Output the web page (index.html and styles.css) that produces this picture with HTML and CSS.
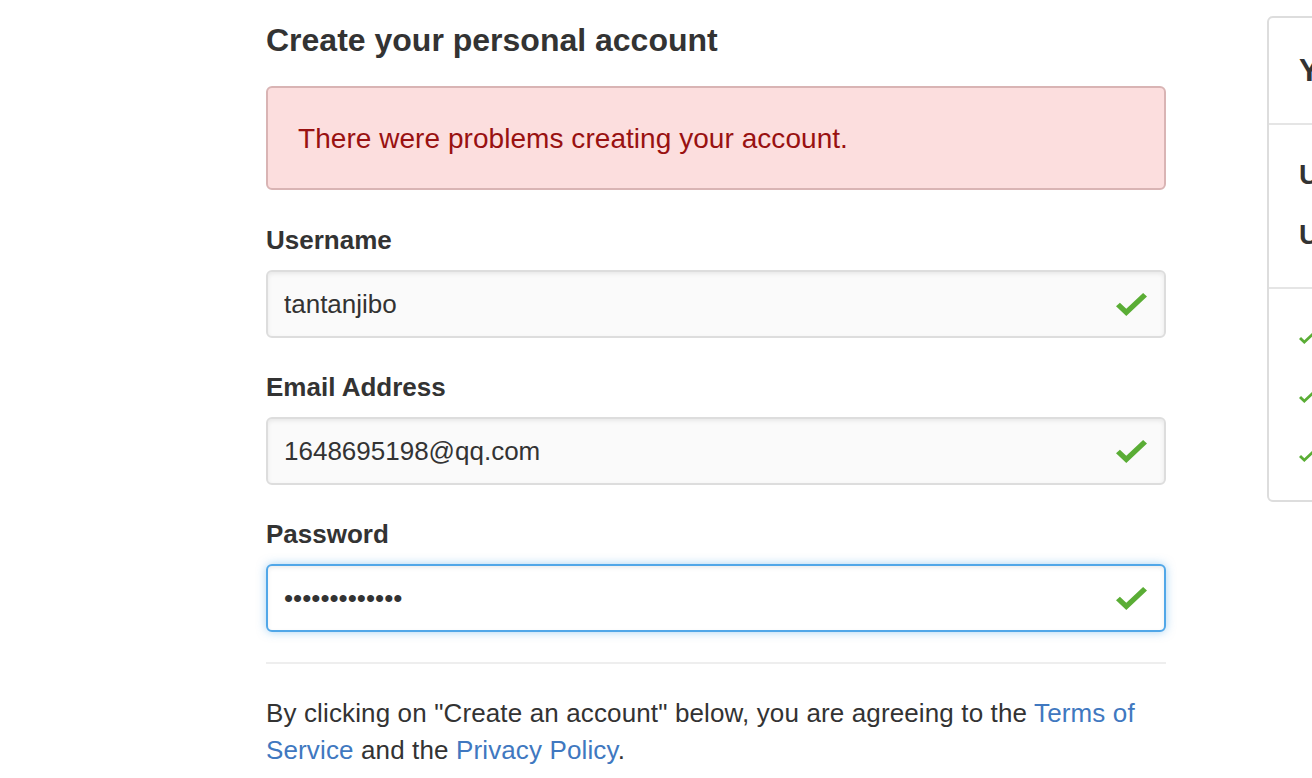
FILE: index.html
```html
<!DOCTYPE html>
<html lang="en">
<head>
<meta charset="utf-8">
<title>Join GitHub</title>
<link rel="stylesheet" href="styles.css">
</head>
<body>
<div class="page">
  <main class="main">
    <h1 class="title">Create your personal account</h1>
    <div class="flash">There were problems creating your account.</div>

    <div class="group">
      <label class="label" for="u">Username</label>
      <div class="field">
        <input class="input" id="u" type="text" value="tantanjibo">
        <svg class="ok" viewBox="0 0 31 23" width="31" height="23" aria-hidden="true"><path d="M31 3.6L10.3 23 0 13.3l3.9-3.6 6.4 6L27.1 0z"/></svg>
      </div>
    </div>

    <div class="group">
      <label class="label" for="e">Email Address</label>
      <div class="field">
        <input class="input" id="e" type="text" value="1648695198@qq.com">
        <svg class="ok" viewBox="0 0 31 23" width="31" height="23" aria-hidden="true"><path d="M31 3.6L10.3 23 0 13.3l3.9-3.6 6.4 6L27.1 0z"/></svg>
      </div>
    </div>

    <div class="group">
      <label class="label" for="p">Password</label>
      <div class="field">
        <input class="input input-focus" id="p" type="password" value="abcdefghijklm">
        <svg class="ok" viewBox="0 0 31 23" width="31" height="23" aria-hidden="true"><path d="M31 3.6L10.3 23 0 13.3l3.9-3.6 6.4 6L27.1 0z"/></svg>
      </div>
    </div>

    <hr class="rule">

    <p class="terms">By clicking on "Create an account" below, you are agreeing to the <a href="#">Terms of Service</a> and the <a href="#">Privacy Policy</a>.</p>
  </main>

  <aside class="panel">
    <h2 class="panel-title">You'll love GitHub</h2>
    <ul class="panel-list strong">
      <li>Unlimited collaborators</li>
      <li>Unlimited public repositories</li>
    </ul>
    <ul class="panel-list checks">
      <li><svg class="mini-ok" viewBox="0 0 31 23" width="16" height="12" aria-hidden="true"><path d="M31 3.6L10.3 23 0 13.3l3.9-3.6 6.4 6L27.1 0z"/></svg>Great communication</li>
      <li><svg class="mini-ok" viewBox="0 0 31 23" width="16" height="12" aria-hidden="true"><path d="M31 3.6L10.3 23 0 13.3l3.9-3.6 6.4 6L27.1 0z"/></svg>Friction-less development</li>
      <li><svg class="mini-ok" viewBox="0 0 31 23" width="16" height="12" aria-hidden="true"><path d="M31 3.6L10.3 23 0 13.3l3.9-3.6 6.4 6L27.1 0z"/></svg>Open source community</li>
    </ul>
  </aside>
</div>
</body>
</html>
```
FILE: styles.css
```css
html, body {
  margin: 0;
  padding: 0;
  background: #fff;
  overflow: hidden;
}

body {
  font-family: "Liberation Sans", Arial, Helvetica, sans-serif;
  color: #333;
  width: 1312px;
  height: 778px;
}

.page {
  display: flex;
  align-items: flex-start;
  gap: 101px;
  padding-left: 266px;
}

.main {
  width: 900px;
  flex: 0 0 900px;
}

.title {
  margin: 20px 0 0;
  font-size: 32px;
  line-height: 40px;
  font-weight: bold;
  color: #333;
}

.flash {
  margin-top: 26px;
  box-sizing: border-box;
  height: 104px;
  padding: 30px 30px;
  border: 2px solid #d9b4b4;
  border-radius: 6px;
  background: #fcdede;
  color: #991111;
  font-size: 28px;
  line-height: 42px;
  letter-spacing: 0.05px;
}

.group {
  margin-top: 35px;
}

.group + .group {
  margin-top: 34px;
}

.label {
  display: block;
  font-size: 26px;
  line-height: 30px;
  font-weight: bold;
  color: #333;
  margin-bottom: 15px;
}

.field {
  position: relative;
}

.input {
  display: block;
  box-sizing: border-box;
  width: 100%;
  height: 68px;
  margin: 0;
  padding: 0 60px 0 16px;
  border: 2px solid #dddddd;
  border-radius: 6px;
  background: #fafafa;
  box-shadow: inset 0 2px 4px rgba(0, 0, 0, 0.075);
  font-family: "Liberation Sans", Arial, Helvetica, sans-serif;
  font-size: 26px;
  color: #333;
  outline: none;
}

.input-focus {
  background: #fff;
  border-color: #51a7e8;
  box-shadow: inset 0 2px 4px rgba(0, 0, 0, 0.075), 0 0 10px rgba(81, 167, 232, 0.5);
}

.ok {
  position: absolute;
  top: 23px;
  right: 19px;
  fill: #5aad35;
}

.rule {
  margin: 30px 0 0;
  height: 0;
  border: 0;
  border-top: 2px solid #eeeeee;
}

.terms {
  margin: 31px 0 0;
  font-size: 26px;
  line-height: 37px;
  letter-spacing: 0.13px;
  color: #333;
}

.terms a {
  color: #4078c0;
  text-decoration: none;
}

.panel {
  flex: 0 0 520px;
  width: 520px;
  margin-top: 16px;
  border: 2px solid #dddddd;
  border-radius: 6px;
  background: #fff;
}

.panel-title {
  margin: 0;
  padding: 35px 30px 34px;
  font-size: 31px;
  line-height: 36px;
  font-weight: bold;
  color: #333;
  border-bottom: 2px solid #e5e5e5;
}

.panel-list {
  list-style: none;
  margin: 0;
  padding: 0 30px;
}

.panel-list.strong {
  padding-top: 20px;
  padding-bottom: 22px;
  border-bottom: 2px solid #e5e5e5;
  font-size: 28px;
  line-height: 60px;
  font-weight: bold;
}

.panel-list.checks {
  padding-top: 18px;
  padding-bottom: 16px;
  font-size: 26px;
  line-height: 59px;
}

.mini-ok {
  fill: #5aad35;
  margin-right: 12px;
  vertical-align: middle;
}
```
